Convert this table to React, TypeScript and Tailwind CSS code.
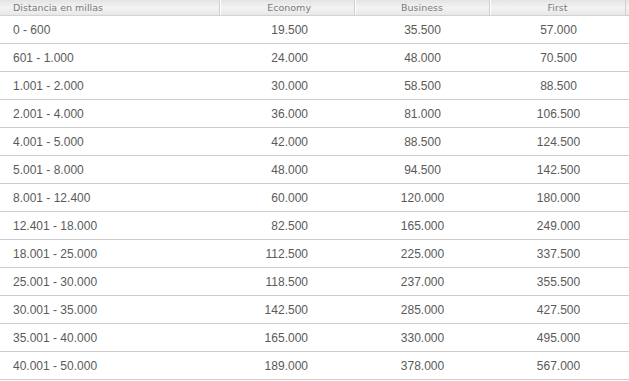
const rows: [string, string, string, string][] = [
  ['0 - 600', '19.500', '35.500', '57.000'],
  ['601 - 1.000', '24.000', '48.000', '70.500'],
  ['1.001 - 2.000', '30.000', '58.500', '88.500'],
  ['2.001 - 4.000', '36.000', '81.000', '106.500'],
  ['4.001 - 5.000', '42.000', '88.500', '124.500'],
  ['5.001 - 8.000', '48.000', '94.500', '142.500'],
  ['8.001 - 12.400', '60.000', '120.000', '180.000'],
  ['12.401 - 18.000', '82.500', '165.000', '249.000'],
  ['18.001 - 25.000', '112.500', '225.000', '337.500'],
  ['25.001 - 30.000', '118.500', '237.000', '355.500'],
  ['30.001 - 35.000', '142.500', '285.000', '427.500'],
  ['35.001 - 40.000', '165.000', '330.000', '495.000'],
  ['40.001 - 50.000', '189.000', '378.000', '567.000'],
];

const cols = 'grid grid-cols-[220px_135px_135px_137px]';

const App = () => {
  return (
    <div className="w-[629px] h-[381px] bg-white overflow-hidden">
      <div
        className={`${cols} h-[16px] border-b border-[#d2d2d2] bg-gradient-to-b from-[#e4e4e4] via-[#f3f3f3] to-[#e8e8e8] text-[9.5px] leading-[15px] text-[#7a7a7a]`}
        style={{ fontFamily: '"DejaVu Sans", sans-serif' }}
      >
        <div className="pl-[13px] border-r border-[#cfcfcf] shadow-[1px_0_0_#fff]">
          Distancia en millas
        </div>
        <div className="text-right pr-[43px] border-r border-[#cfcfcf] shadow-[1px_0_0_#fff]">
          Economy
        </div>
        <div className="text-center border-r border-[#cfcfcf] shadow-[1px_0_0_#fff]">
          Business
        </div>
        <div className="text-center border-r border-[#cfcfcf] mr-[1px]">First</div>
      </div>
      {rows.map((r) => (
        <div
          key={r[0]}
          className={`${cols} h-[28px] border-b border-[#cccccc] items-center text-[12px] text-[#5a5a5a]`}
          style={{ fontFamily: '"Liberation Sans", Arial, sans-serif' }}
        >
          <div className="pl-[13px]">{r[0]}</div>
          <div className="text-right pr-[47px]">{r[1]}</div>
          <div className="text-center">{r[2]}</div>
          <div className="text-center">{r[3]}</div>
        </div>
      ))}
    </div>
  );
};

export default App;
